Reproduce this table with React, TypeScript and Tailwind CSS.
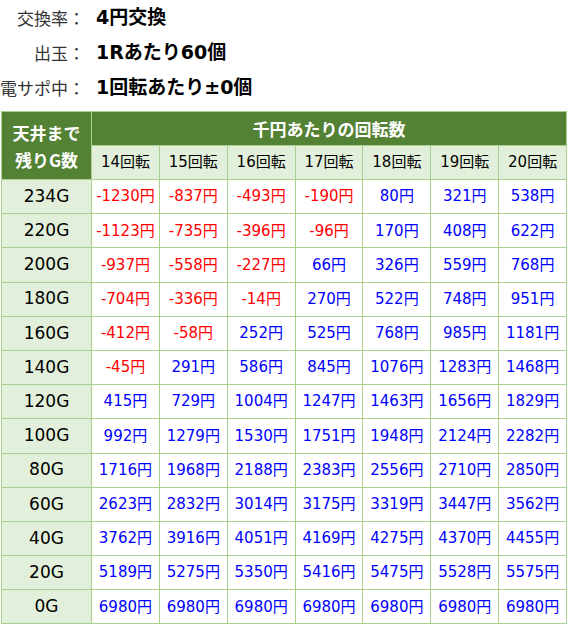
const info = [
  { label: '交換率：', value: '4円交換' },
  { label: '出玉：', value: '1Rあたり60個' },
  { label: '電サポ中：', value: '1回転あたり±0個' },
]

const spins = [14, 15, 16, 17, 18, 19, 20]

const rows: [string, number[]][] = [
  ['234G', [-1230, -837, -493, -190, 80, 321, 538]],
  ['220G', [-1123, -735, -396, -96, 170, 408, 622]],
  ['200G', [-937, -558, -227, 66, 326, 559, 768]],
  ['180G', [-704, -336, -14, 270, 522, 748, 951]],
  ['160G', [-412, -58, 252, 525, 768, 985, 1181]],
  ['140G', [-45, 291, 586, 845, 1076, 1283, 1468]],
  ['120G', [415, 729, 1004, 1247, 1463, 1656, 1829]],
  ['100G', [992, 1279, 1530, 1751, 1948, 2124, 2282]],
  ['80G', [1716, 1968, 2188, 2383, 2556, 2710, 2850]],
  ['60G', [2623, 2832, 3014, 3175, 3319, 3447, 3562]],
  ['40G', [3762, 3916, 4051, 4169, 4275, 4370, 4455]],
  ['20G', [5189, 5275, 5350, 5416, 5475, 5528, 5575]],
  ['0G', [6980, 6980, 6980, 6980, 6980, 6980, 6980]],
]

export default function App() {
  return (
    <div className="bg-white w-[567px] h-[626px] overflow-hidden font-['DejaVu_Sans','Noto_Sans_CJK_JP',sans-serif]">
      {/* Spec */}
      <div className="flex flex-col">
        {info.map((item) => (
          <div key={item.label} className="flex items-center h-[35px]">
            <span className="w-[85px] text-right text-[17px] text-[#333] font-['Noto_Sans_CJK_JP',sans-serif]">
              {item.label}
            </span>
            <span className="ml-[11px] text-[19px] font-bold text-black font-['DejaVu_Sans','Noto_Sans_CJK_JP',sans-serif]">
              {item.value}
            </span>
          </div>
        ))}
      </div>

      {/* Table */}
      <table className="mt-[6px] ml-px border-collapse table-fixed w-[565px]">
        <colgroup>
          <col className="w-[90px]" />
          {spins.map((s) => (
            <col key={s} className="w-[67.86px]" />
          ))}
        </colgroup>
        <thead>
          <tr className="h-[34px]">
            <th
              rowSpan={2}
              className="border border-[#a9d08e] bg-[#548235] text-white text-[17px] font-bold leading-[27px] font-['Noto_Sans_CJK_JP',sans-serif]"
            >
              天井まで
              <br />
              残りG数
            </th>
            <th
              colSpan={7}
              className="border border-[#a9d08e] bg-[#548235] text-white text-[17px] font-bold font-['Noto_Sans_CJK_JP',sans-serif]"
            >
              千円あたりの回転数
            </th>
          </tr>
          <tr className="h-[34px]">
            {spins.map((s) => (
              <th key={s} className="border border-[#a9d08e] bg-[#e2efda] text-[15px] font-normal text-black">
                {s}回転
              </th>
            ))}
          </tr>
        </thead>
        <tbody>
          {rows.map(([g, vals]) => (
            <tr key={g} className="h-[34.2px]">
              <td className="border border-[#a9d08e] bg-[#e2efda] text-center text-[17px] text-black">{g}</td>
              {vals.map((v, i) => (
                <td
                  key={i}
                  className={`border border-[#a9d08e] bg-white text-center text-[15px] ${v < 0 ? 'text-[#ff0000]' : 'text-[#0000ff]'}`}
                >
                  {v}円
                </td>
              ))}
            </tr>
          ))}
        </tbody>
      </table>
    </div>
  )
}
